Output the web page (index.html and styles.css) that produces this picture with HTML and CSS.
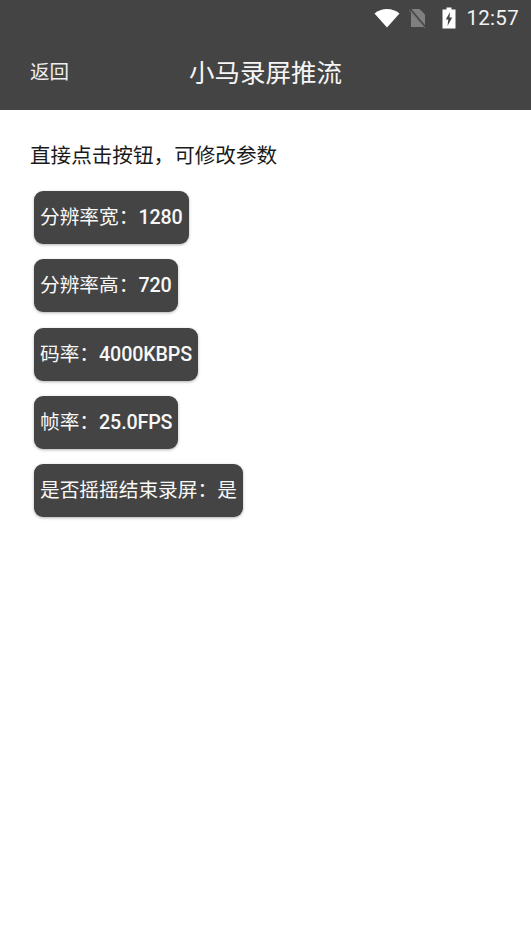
FILE: index.html
```html
<!DOCTYPE html>
<html lang="zh">
<head>
<meta charset="utf-8">
<title>小马录屏推流</title>
<link rel="stylesheet" href="styles.css">
</head>
<body>
<div class="header">
  <div class="status">
    <svg class="ic-wifi" width="26" height="20" viewBox="0 0 26 20"><path d="M0.500 5.500C4 2.500 8.200 1 13 1s9 1.500 12.500 4.500L13 19.500z" fill="#fff"/></svg>
    <svg class="ic-sim" width="18" height="20" viewBox="0 0 18 20"><path d="M2 1H10.500L16 6.500V19H2z" fill="#808080"/><path d="M1 0.500L17 19.500" stroke="#444" stroke-width="1.500"/><path d="M0 2L16 20" stroke="#707070" stroke-width="1"/></svg>
    <svg class="ic-bat" width="14" height="22" viewBox="0 0 14 22"><path d="M4.500 0.500H9.500V2.500H13.500V21.500H0.500V2.500H4.500z" fill="#fff"/><path d="M8 5L3.800 12.500H6.300L5.500 19L10.200 10.500H7.500z" fill="#444"/></svg>
    <span class="time">12:57</span>
  </div>
  <div class="toolbar">
    <span class="back">返回</span>
    <span class="title">小马录屏推流</span>
  </div>
</div>
<main class="content">
  <p class="hint">直接点击按钮，可修改参数</p>
  <button class="btn">分辨率宽：<span class="num">1280</span></button>
  <button class="btn">分辨率高：<span class="num">720</span></button>
  <button class="btn">码率：<span class="num">4000KBPS</span></button>
  <button class="btn">帧率：<span class="num">25.0FPS</span></button>
  <button class="btn">是否摇摇结束录屏：是</button>
</main>
</body>
</html>
```
FILE: styles.css
```css
* { box-sizing: border-box; }
html, body { margin: 0; padding: 0; }
body {
  width: 531px;
  height: 951px;
  background: #fff;
  overflow: hidden;
  font-family: Roboto, "Noto Sans CJK SC", sans-serif;
}
.header {
  height: 110px;
  background: #444444;
  color: #fff;
}
.status {
  height: 35px;
  display: flex;
  align-items: center;
  justify-content: flex-end;
  padding: 0 12px 0 0;
}
.ic-wifi { margin-right: 9px; }
.ic-sim { margin-right: 15px; }
.ic-bat { margin-right: 10px; }
.time { font-size: 20.500px; color: #f2f2f2; letter-spacing: 0.300px; }
.toolbar {
  height: 75px;
  position: relative;
  display: flex;
  align-items: center;
  padding: 0 0 4px 30px;
}
.back { font-size: 19.500px; color: #eee; }
.title {
  position: absolute;
  left: 189px;
  top: 21px;
  font-size: 25.500px;
  line-height: 34px;
  color: #f5f5f5;
}
.content {
  padding: 32px 0 0 34px;
  display: flex;
  flex-direction: column;
  align-items: flex-start;
}
.hint {
  margin: 0 0 20px -4px;
  font-size: 20.600px;
  line-height: 29px;
  color: #1a1a1a;
}
.btn {
  height: 53px;
  margin-bottom: 15.300px;
  padding: 0 6px 4px;
  border: 0;
  border-radius: 9px;
  background: #444444;
  color: #f8f8f8;
  font-family: inherit;
  font-size: 19.700px;
  white-space: nowrap;
  box-shadow: 0 1px 3px rgba(0, 0, 0, 0.3);
}
.num { font-weight: 500; letter-spacing: -0.150px; }
```
